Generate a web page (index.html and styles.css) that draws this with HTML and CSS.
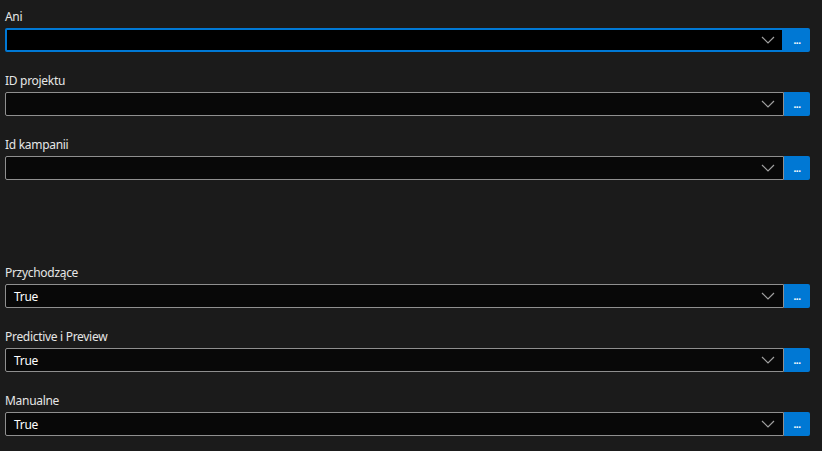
FILE: index.html
```html
<!DOCTYPE html>
<html lang="pl">
<head>
<meta charset="utf-8">
<link rel="stylesheet" href="styles.css">
</head>
<body>
<div class="form">
  <div class="field">
    <div class="label">Ani</div>
    <div class="row">
      <div class="select focused"><span class="value"></span>
        <svg class="chev" width="14" height="8" viewBox="0 0 14 8"><path d="M1 1 L7 7 L13 1" fill="none" stroke="#a0a0a0" stroke-width="1.2"/></svg>
      </div>
      <button class="more">...</button>
    </div>
  </div>
  <div class="field">
    <div class="label">ID projektu</div>
    <div class="row">
      <div class="select"><span class="value"></span>
        <svg class="chev" width="14" height="8" viewBox="0 0 14 8"><path d="M1 1 L7 7 L13 1" fill="none" stroke="#a0a0a0" stroke-width="1.2"/></svg>
      </div>
      <button class="more">...</button>
    </div>
  </div>
  <div class="field">
    <div class="label">Id kampanii</div>
    <div class="row">
      <div class="select"><span class="value"></span>
        <svg class="chev" width="14" height="8" viewBox="0 0 14 8"><path d="M1 1 L7 7 L13 1" fill="none" stroke="#a0a0a0" stroke-width="1.2"/></svg>
      </div>
      <button class="more">...</button>
    </div>
  </div>
  <div class="spacer"></div>
  <div class="field">
    <div class="label">Przychodzące</div>
    <div class="row">
      <div class="select"><span class="value">True</span>
        <svg class="chev" width="14" height="8" viewBox="0 0 14 8"><path d="M1 1 L7 7 L13 1" fill="none" stroke="#a0a0a0" stroke-width="1.2"/></svg>
      </div>
      <button class="more">...</button>
    </div>
  </div>
  <div class="field">
    <div class="label">Predictive i Preview</div>
    <div class="row">
      <div class="select"><span class="value">True</span>
        <svg class="chev" width="14" height="8" viewBox="0 0 14 8"><path d="M1 1 L7 7 L13 1" fill="none" stroke="#a0a0a0" stroke-width="1.2"/></svg>
      </div>
      <button class="more">...</button>
    </div>
  </div>
  <div class="field">
    <div class="label">Manualne</div>
    <div class="row">
      <div class="select"><span class="value">True</span>
        <svg class="chev" width="14" height="8" viewBox="0 0 14 8"><path d="M1 1 L7 7 L13 1" fill="none" stroke="#a0a0a0" stroke-width="1.2"/></svg>
      </div>
      <button class="more">...</button>
    </div>
  </div>
</div>
</body>
</html>
```
FILE: styles.css
```css
html, body {
  margin: 0;
  padding: 0;
  background: #1b1b1b;
  height: 100%;
}
body {
  font-family: "Noto Sans", "Open Sans", sans-serif;
  font-size: 12px;
  letter-spacing: -0.3px;
  color: #e6e6e6;
}
.form {
  padding-left: 5px;
  width: 805px;
  display: flex;
  flex-direction: column;
}
.field {
  height: 64px;
  padding-top: 8px;
  box-sizing: border-box;
  display: flex;
  flex-direction: column;
  gap: 4px;
}
.spacer {
  height: 64px;
}
.label {
  height: 16px;
  line-height: 16px;
  color: #e6e6e6;
  padding-top: 1px;
  margin-bottom: -1px;
}
.row {
  display: flex;
  height: 24px;
}
.select {
  flex: 1;
  box-sizing: border-box;
  border: 1px solid #8f8f8f;
  border-radius: 2px 0 0 2px;
  background: #080808;
  display: flex;
  align-items: center;
  padding: 0 8px;
}
.select.focused {
  border: 2px solid #0078d4;
  background: #000;
  padding: 0 7px;
}
.value {
  flex: 1;
  color: #ffffff;
  line-height: 16px;
  padding-top: 1px;
}
.chev {
  display: block;
}
.more {
  width: 26px;
  height: 24px;
  border: 0;
  margin: 0;
  padding: 0 0 4px;
  background: #0078d4;
  border-radius: 0 2px 2px 0;
  color: #ffffff;
  font-family: "Noto Sans", sans-serif;
  font-size: 10px;
  font-weight: bold;
  letter-spacing: -0.5px;
  line-height: 24px;
}
```
